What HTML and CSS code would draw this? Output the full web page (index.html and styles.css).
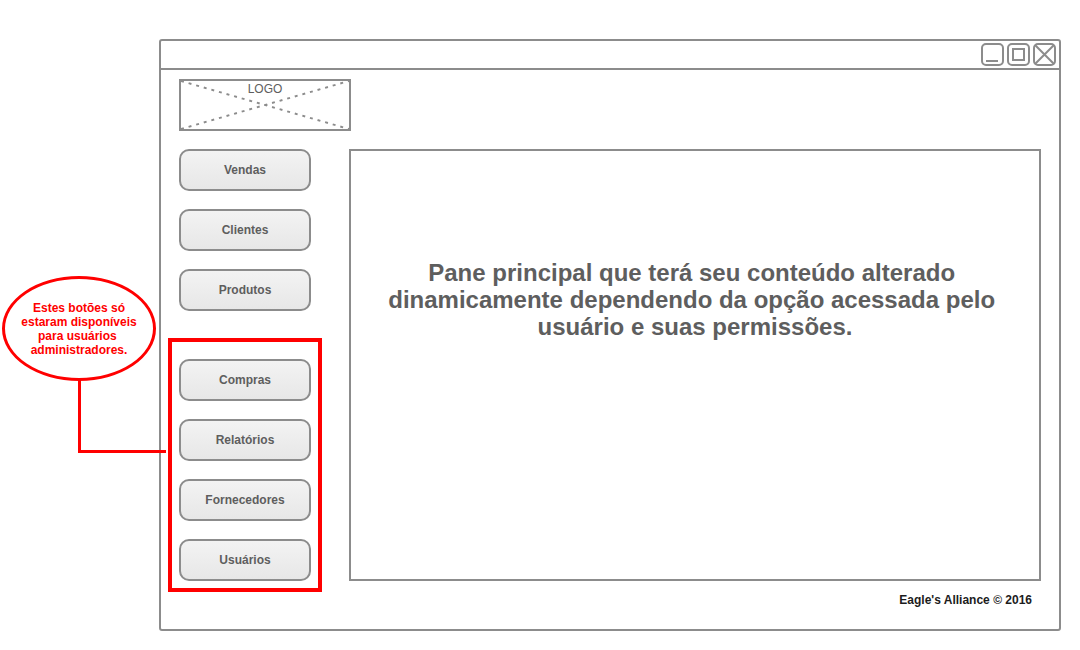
FILE: index.html
```html
<!DOCTYPE html>
<html lang="pt-BR">
<head>
<meta charset="utf-8">
<meta name="viewport" content="width=device-width, initial-scale=1">
<title>Eagle's Alliance</title>
<link rel="stylesheet" href="styles.css">
</head>
<body>
<div class="board">
  <aside class="notes">
    <p class="note">Estes botões só<br>estaram disponíveis<br>para usuários&nbsp;<br>administradores.</p>
  </aside>
  <div class="window">
    <header class="titlebar">
      <button class="control" type="button" aria-label="Minimizar">
        <svg viewBox="0 0 24 24"><rect x="2" y="2" width="21" height="21" rx="4"/><path d="M6 19H18"/></svg>
      </button>
      <button class="control" type="button" aria-label="Maximizar">
        <svg viewBox="0 0 24 24"><rect x="2" y="2" width="21" height="21" rx="4"/><path d="M7 7H18V18H7Z"/></svg>
      </button>
      <button class="control" type="button" aria-label="Fechar">
        <svg viewBox="0 0 24 24"><rect x="2" y="2" width="21" height="21" rx="4"/><path d="M3 3L22 22M22 3L3 22"/></svg>
      </button>
    </header>
    <div class="content">
      <div class="logo">
        <svg class="logo-cross" viewBox="0 0 170 50" preserveAspectRatio="none" aria-hidden="true"><path d="M0 0L170 50"/><path d="M0 50L170 0"/></svg>
        <span class="logo-text">LOGO</span>
      </div>
      <div class="columns">
        <nav class="menu">
          <button class="item" type="button">Vendas</button>
          <button class="item" type="button">Clientes</button>
          <button class="item" type="button">Produtos</button>
          <div class="admin">
            <button class="item" type="button">Compras</button>
            <button class="item" type="button">Relatórios</button>
            <button class="item" type="button">Fornecedores</button>
            <button class="item" type="button">Usuários</button>
          </div>
        </nav>
        <main class="pane">
          <p class="message">Pane principal que terá seu conteúdo alterado&nbsp;<br>dinamicamente dependendo da opção acessada pelo&nbsp;<br>usuário e suas permissões.</p>
        </main>
      </div>
      <footer class="footer">Eagle's Alliance © 2016</footer>
    </div>
  </div>
</div>
</body>
</html>
```
FILE: styles.css
```css
*,
*::after {
  box-sizing: border-box;
}

body {
  margin: 0;
  background: #fff;
  color: #5e5e5e;
  font: 12px/14px "Liberation Sans", Arial, sans-serif;
}

p {
  margin: 0;
}

.board {
  display: grid;
  grid-template-columns: 159px minmax(0, 1fr);
  min-height: 100vh;
  padding: 39px 19px 19px 0;
}

.notes {
  padding: 237px 3px 0 2px;
}

.note {
  position: relative;
  display: grid;
  place-content: center;
  height: 105px;
  border: 3px solid #f00;
  border-radius: 50%;
  color: #f00;
  font-weight: bold;
  text-align: center;
}

/* elbow line from the note to the administrator buttons */
.note::after {
  content: "";
  position: absolute;
  z-index: 1;
  top: 100%;
  left: 73px;
  width: 88px;
  height: 75px;
  border: solid #f00;
  border-width: 0 0 3px 3px;
}

.window {
  display: flex;
  flex-direction: column;
  border: 2px solid #8c8c8c;
  border-radius: 3px;
}

.titlebar {
  display: flex;
  justify-content: flex-end;
  gap: 2px;
  padding: 1px 3px;
  border-bottom: 2px solid #8c8c8c;
}

.control {
  display: flex;
  width: 24px;
  height: 25px;
  padding: 0;
  border: 0;
  background: none;
}

.control svg {
  width: 24px;
  height: 24px;
  overflow: visible;
  fill: none;
  stroke: #8c8c8c;
  stroke-width: 2;
}

.content {
  display: flex;
  flex: 1;
  flex-direction: column;
  padding: 9px 18px 22px;
}

.logo {
  position: relative;
  width: 172px;
  height: 52px;
  padding-top: 1px;
  border: 2px solid #8c8c8c;
  text-align: center;
}

.logo-cross {
  position: absolute;
  inset: 0;
  width: 100%;
  height: 100%;
  fill: none;
  stroke: #8c8c8c;
  stroke-width: 2;
  stroke-dasharray: 3 5;
}

.logo-text {
  position: relative;
}

.columns {
  display: grid;
  flex: 1;
  grid-template-columns: 132px minmax(0, 1fr);
  gap: 38px;
  margin-top: 18px;
}

.menu,
.admin {
  display: flex;
  flex-direction: column;
  gap: 18px;
}

.admin {
  margin: 9px -11px -11px;
  padding: 17px 7px 7px;
  border: 4px solid #f00;
}

.item {
  height: 42px;
  padding: 0;
  border: 2px solid #8c8c8c;
  border-radius: 10px;
  background: linear-gradient(#f3f3f3, #e7e7e7);
  color: #5e5e5e;
  font: bold 12px/14px "Liberation Sans", Arial, sans-serif;
}

.pane {
  padding: 108px 20px 20px;
  border: 2px solid #8c8c8c;
}

.message {
  font-size: 24px;
  font-weight: bold;
  line-height: 27px;
  text-align: center;
}

.footer {
  padding: 12px 9px 0;
  color: #1c1c1c;
  font-weight: bold;
  text-align: right;
}
```
